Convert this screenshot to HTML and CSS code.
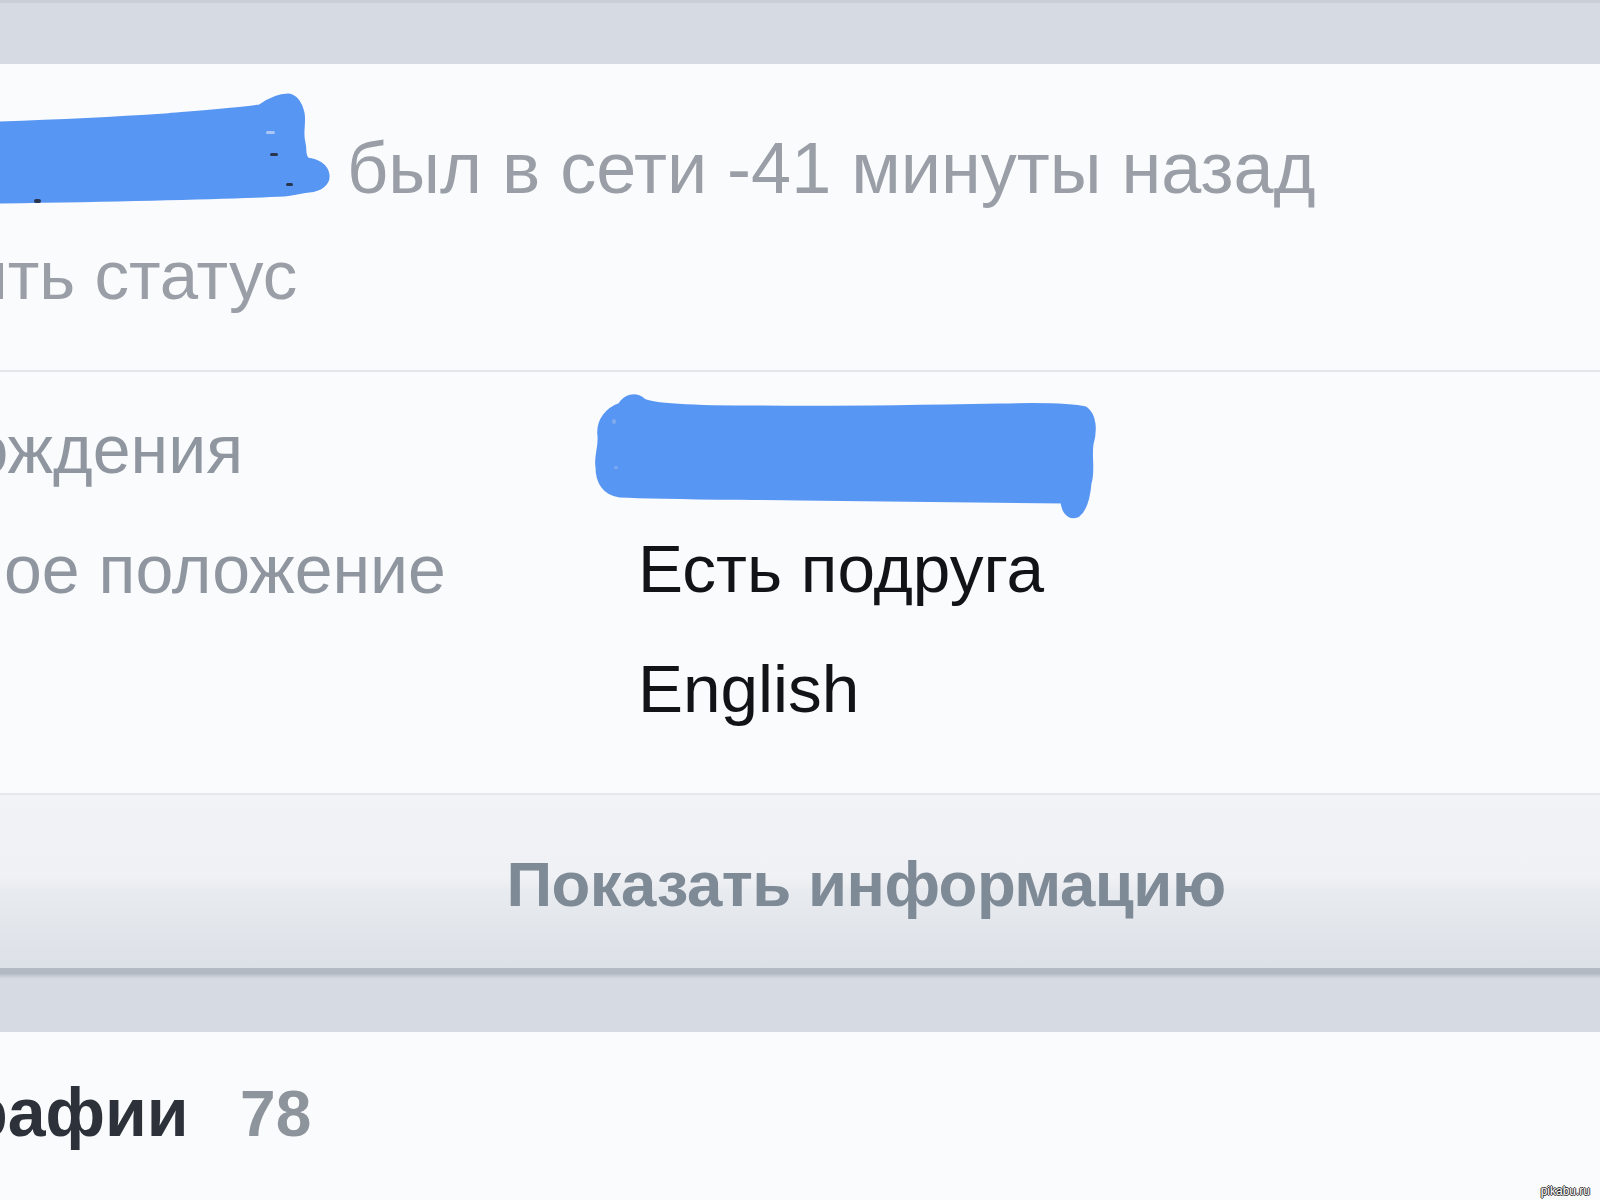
FILE: index.html
```html
<!DOCTYPE html>
<html lang="ru">
<head>
<meta charset="utf-8">
<title>Профиль</title>
<link rel="stylesheet" href="styles.css">
</head>
<body>
<div class="wrap">
  <div class="topbar"></div>

  <section class="card head">
    <div class="name-line">
      <div class="name-mask">
        <svg width="578" height="112" viewBox="-243 94 578 112" aria-hidden="true">
          <path class="ink" d="M -243 127 L 0 125 C 60 123, 120 120, 165 117 C 200 114, 238 111, 260 108 C 270 101, 279 97, 288 97 C 296 98, 299 105, 301 113 C 303 123, 299 133, 302 143 C 304 151, 301 157, 307 161 C 317 162, 325 167, 326 175 C 327 183, 319 188, 309 189 C 299 190, 294 192, 284 193 C 220 196, 120 198, 0 200 L -243 200 Z"/>
          <rect x="266" y="131" width="9" height="3" rx="1.5" fill="#a9c6f7"/>
          <rect x="270" y="153" width="8" height="3" rx="1.5" fill="#2a3550"/>
          <rect x="286" y="183" width="7" height="3" rx="1.5" fill="#2a3550"/>
          <rect x="34" y="199" width="7" height="4" rx="2" fill="#2a3550"/>
        </svg>
      </div>
      <span class="online">был в сети -41 минуты назад</span>
    </div>
    <div class="status">Изменить статус</div>
  </section>

  <section class="card info">
    <div class="info-grid">
      <div class="label">День рождения</div>
      <div class="value">
        <svg class="redact" width="520" height="136" viewBox="588 386 520 136" aria-hidden="true">
          <path class="ink" d="M 601 436 C 599 421, 609 410, 621 406 C 626 398, 635 395, 642 401 C 652 408, 700 409, 760 409 C 850 410, 950 408, 1000 407 C 1040 406, 1070 406, 1085 410 C 1093 416, 1094 430, 1090 444 C 1088 458, 1092 471, 1088 483 C 1087 495, 1085 508, 1077 514 C 1068 517, 1064 508, 1064 500 C 1020 500, 900 498, 800 497 C 720 496, 660 496, 620 494 C 605 492, 599 481, 599 467 C 597 457, 602 448, 601 436 Z"/>
          <rect x="612" y="419" width="4" height="5" rx="2" fill="#7fa9ef"/>
          <rect x="614" y="466" width="4" height="3" rx="1.5" fill="#7fa9ef"/>
        </svg>
      </div>
      <div class="label">Семейное положение</div>
      <div class="value">Есть подруга</div>
      <div class="label">Языки</div>
      <div class="value">English</div>
    </div>
  </section>

  <div class="more">
    <span class="more-text">Показать информацию</span>
  </div>

  <div class="gap"></div>

  <section class="card photos">
    <span class="photos-title">Фотографии</span>
    <span class="photos-count">78</span>
  </section>
</div>
<div class="watermark">pikabu.ru</div>
</body>
</html>
```

FILE: styles.css
```css
html, body {
  margin: 0;
  padding: 0;
}

body {
  width: 1600px;
  height: 1200px;
  overflow: hidden;
  background: #fafbfc;
  font-family: "Liberation Sans", Arial, "Noto Sans", sans-serif;
  position: relative;
}

.wrap {
  margin-left: -243px;
  width: 2218px;
}

.topbar {
  height: 64px;
  box-sizing: border-box;
  background: #d6dbe3;
  border-top: 3px solid #c9ced7;
}

.card {
  background: #fafbfc;
}

.ink {
  fill: #5896f3;
  stroke: #5896f3;
  stroke-width: 7;
  stroke-linejoin: round;
}

/* ---------- header card ---------- */
.head {
  padding-top: 30px;
  padding-bottom: 56px;
  border-bottom: 2px solid #e4e6ea;
  height: 308px;
  box-sizing: border-box;
}

.name-line {
  display: flex;
  align-items: flex-start;
  height: 112px;
}

.name-mask svg {
  display: block;
  overflow: visible;
}

.online {
  margin-left: 12px;
  margin-top: 34px;
  font-size: 72px;
  line-height: 80px;
  color: #9a9fa7;
  white-space: nowrap;
}

.status {
  margin-top: 30px;
  margin-left: 7px;
  font-size: 69px;
  line-height: 80px;
  color: #9a9fa7;
  white-space: nowrap;
}

/* ---------- info card ---------- */
.info {
  padding-top: 17px;
  padding-bottom: 44px;
  border-bottom: 2px solid #e6e8eb;
}

.info-grid {
  display: grid;
  grid-template-columns: 881px 1fr;
  grid-auto-rows: 120px;
}

.label {
  font-size: 68px;
  line-height: 120px;
  color: #9096a0;
  white-space: nowrap;
}

.value {
  font-size: 67.5px;
  line-height: 120px;
  color: #121316;
  white-space: nowrap;
}

.redact {
  display: block;
  margin-left: -50px;
  margin-top: -3px;
  overflow: visible;
}

/* ---------- show more button ---------- */
.more {
  height: 179px;
  box-sizing: border-box;
  padding-top: 54px;
  text-align: center;
  background: linear-gradient(#f2f3f6 0%, #eff1f4 48%, #e8ebef 55%, #dce0e7 100%);
  border-bottom: 6px solid #b3b9c3;
  box-shadow: 0 2px 3px rgba(90, 100, 115, 0.25);
  position: relative;
}

.more-text {
  font-size: 63.5px;
  line-height: 70px;
  font-weight: bold;
  color: #7f8a97;
  letter-spacing: -0.5px;
}

.gap {
  height: 58px;
  background: #d5dae3;
}

/* ---------- photos ---------- */
.photos {
  padding-top: 40px;
  padding-left: 9px;
  height: 167px;
  box-sizing: border-box;
  white-space: nowrap;
}

.photos-title {
  font-size: 68px;
  line-height: 80px;
  font-weight: bold;
  color: #2d323a;
}

.photos-count {
  margin-left: 47px;
  font-size: 64px;
  line-height: 80px;
  font-weight: bold;
  color: #8e949c;
}

.watermark {
  position: absolute;
  right: 10px;
  bottom: 2px;
  font-size: 12px;
  line-height: 14px;
  color: #ffffff;
  text-shadow: 1px 0 0 #333, -1px 0 0 #333, 0 1px 0 #333, 0 -1px 0 #333;
}
```
